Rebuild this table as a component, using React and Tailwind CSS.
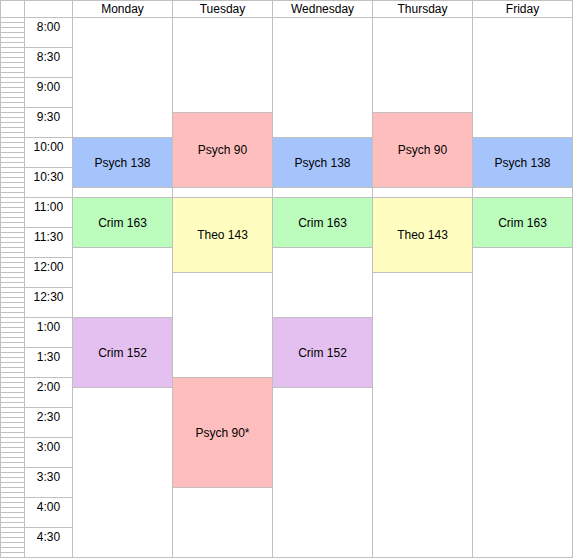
import React from "react";

const DAYS = ["Monday", "Tuesday", "Wednesday", "Thursday", "Friday"];

const TIMES = [
  "8:00", "8:30", "9:00", "9:30", "10:00", "10:30", "11:00", "11:30",
  "12:00", "12:30", "1:00", "1:30", "2:00", "2:30", "3:00", "3:30",
  "4:00", "4:30",
];

// minutes counted from 8:00
const COLORS = {
  blue: "bg-[#a6c4fc]",
  pink: "bg-[#ffbebe]",
  green: "bg-[#bcfcbc]",
  yellow: "bg-[#fffec0]",
  purple: "bg-[#e4c0f0]",
};

const psych138 = { title: "Psych 138", start: 120, end: 170, color: "blue" };
const psych90 = { title: "Psych 90", start: 95, end: 170, color: "pink" };
const crim163 = { title: "Crim 163", start: 180, end: 230, color: "green" };
const theo143 = { title: "Theo 143", start: 180, end: 255, color: "yellow" };
const crim152 = { title: "Crim 152", start: 300, end: 370, color: "purple" };
const psych90b = { title: "Psych 90*", start: 360, end: 470, color: "pink" };

const SCHEDULE = [
  [psych138, crim163, crim152],
  [psych90, theo143, psych90b],
  [psych138, crim163, crim152],
  [psych90, theo143],
  [psych138, crim163],
];

function DayColumn({ name, events, last }) {
  let cursor = 18;
  const parts = [];

  events.forEach((ev, i) => {
    const top = 17 + ev.start;
    const bottom = 17 + ev.end;
    if (top > cursor) {
      parts.push(<div key={`s${i}`} style={{ height: top - cursor }} />);
    }
    parts.push(
      <div
        key={`e${i}`}
        style={{ height: bottom - top + 1 }}
        className={`flex items-center justify-center border-y border-[#c0c0c0] ${COLORS[ev.color]}`}
      >
        {ev.title}
      </div>
    );
    cursor = bottom + 1;
  });

  return (
    <div className={`flex flex-col ${last ? "" : "border-r border-[#c0c0c0]"}`}>
      <div className="h-[17px] shrink-0 border-b border-[#c0c0c0] pt-[1px] text-center">
        {name}
      </div>
      {parts}
    </div>
  );
}

export default function App() {
  return (
    <div className="w-[573px] h-[558px] bg-white border border-[#c0c0c0] overflow-hidden font-['Liberation_Sans',Arial,sans-serif] text-[12px] leading-[14px] text-black">
      <div className="grid h-full grid-cols-[24px_48px_100px_100px_100px_100px_99px] overflow-hidden">

        <div className="flex flex-col border-r border-[#c0c0c0]">
          <div className="h-[17px] shrink-0 border-b border-[#c0c0c0]" />
          {Array.from({ length: 108 }).map((_, i) => (
            <div key={i} className="h-[5px] shrink-0 border-b border-[#c0c0c0]" />
          ))}
        </div>

        <div className="flex flex-col border-r border-[#c0c0c0]">
          <div className="h-[17px] shrink-0 border-b border-[#c0c0c0]" />
          {TIMES.map((t) => (
            <div
              key={t}
              className="h-[30px] shrink-0 border-b border-[#c0c0c0] pt-[2px] text-center"
            >
              {t}
            </div>
          ))}
        </div>

        {DAYS.map((day, i) => (
          <DayColumn
            key={day}
            name={day}
            events={SCHEDULE[i]}
            last={i === DAYS.length - 1}
          />
        ))}

      </div>
    </div>
  );
}
